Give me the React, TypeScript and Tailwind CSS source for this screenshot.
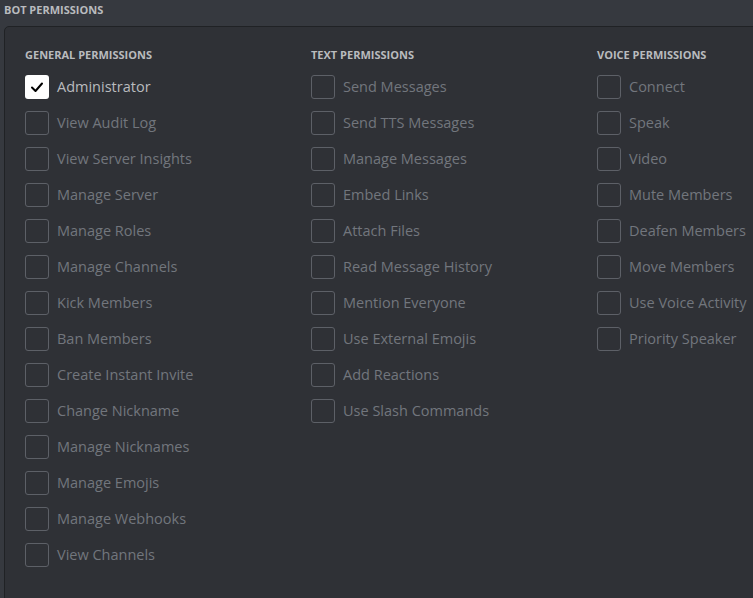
import React from 'react';

const general = [
  'Administrator',
  'View Audit Log',
  'View Server Insights',
  'Manage Server',
  'Manage Roles',
  'Manage Channels',
  'Kick Members',
  'Ban Members',
  'Create Instant Invite',
  'Change Nickname',
  'Manage Nicknames',
  'Manage Emojis',
  'Manage Webhooks',
  'View Channels',
];

const text = [
  'Send Messages',
  'Send TTS Messages',
  'Manage Messages',
  'Embed Links',
  'Attach Files',
  'Read Message History',
  'Mention Everyone',
  'Use External Emojis',
  'Add Reactions',
  'Use Slash Commands',
];

const voice = [
  'Connect',
  'Speak',
  'Video',
  'Mute Members',
  'Deafen Members',
  'Move Members',
  'Use Voice Activity',
  'Priority Speaker',
];

function Checkbox({ label, checked }: { label: string; checked?: boolean }) {
  return (
    <div className="flex items-center h-[36px] gap-[8px]">
      {checked ? (
        <div className="w-[24px] h-[24px] rounded-[3px] bg-white flex items-center justify-center shrink-0">
          <svg width="14" height="14" viewBox="0 0 14 14" fill="none">
            <path d="M2 7.5 L5.5 11 L12 3.5" stroke="#000" strokeWidth="2" strokeLinecap="round" strokeLinejoin="round" />
          </svg>
        </div>
      ) : (
        <div className="w-[24px] h-[24px] rounded-[3px] border border-[#5d6067] shrink-0" />
      )}
      <span className={`text-[14.5px] whitespace-nowrap ${checked ? 'text-[#b9bbbe]' : 'text-[#72767d]'}`}>
        {label}
      </span>
    </div>
  );
}

function Column({ title, items, checked = [] }: { title: string; items: string[]; checked?: string[] }) {
  return (
    <div className="w-[286px] shrink-0">
      <h4 className="text-[11px] font-bold uppercase text-[#b9bbbe] leading-[16px] mb-[6px]">{title}</h4>
      <div className="flex flex-col">
        {items.map((item) => (
          <Checkbox key={item} label={item} checked={checked.includes(item)} />
        ))}
      </div>
    </div>
  );
}

export default function App() {
  return (
    <div
      className="w-[753px] h-[598px] overflow-hidden bg-[#36393f] pl-[4px] pt-[2px]"
      style={{ fontFamily: '"Open Sans", "Noto Sans", sans-serif' }}
    >
      <h3 className="text-[11px] font-bold uppercase text-[#b9bbbe] leading-[16px]">Bot Permissions</h3>
      <div className="mt-[8px] w-[800px] h-[600px] bg-[#2f3136] border border-[#202225] rounded-[5px] pl-[20px] pt-[20px] flex">
        <Column title="General Permissions" items={general} checked={['Administrator']} />
        <Column title="Text Permissions" items={text} />
        <Column title="Voice Permissions" items={voice} />
      </div>
    </div>
  );
}
